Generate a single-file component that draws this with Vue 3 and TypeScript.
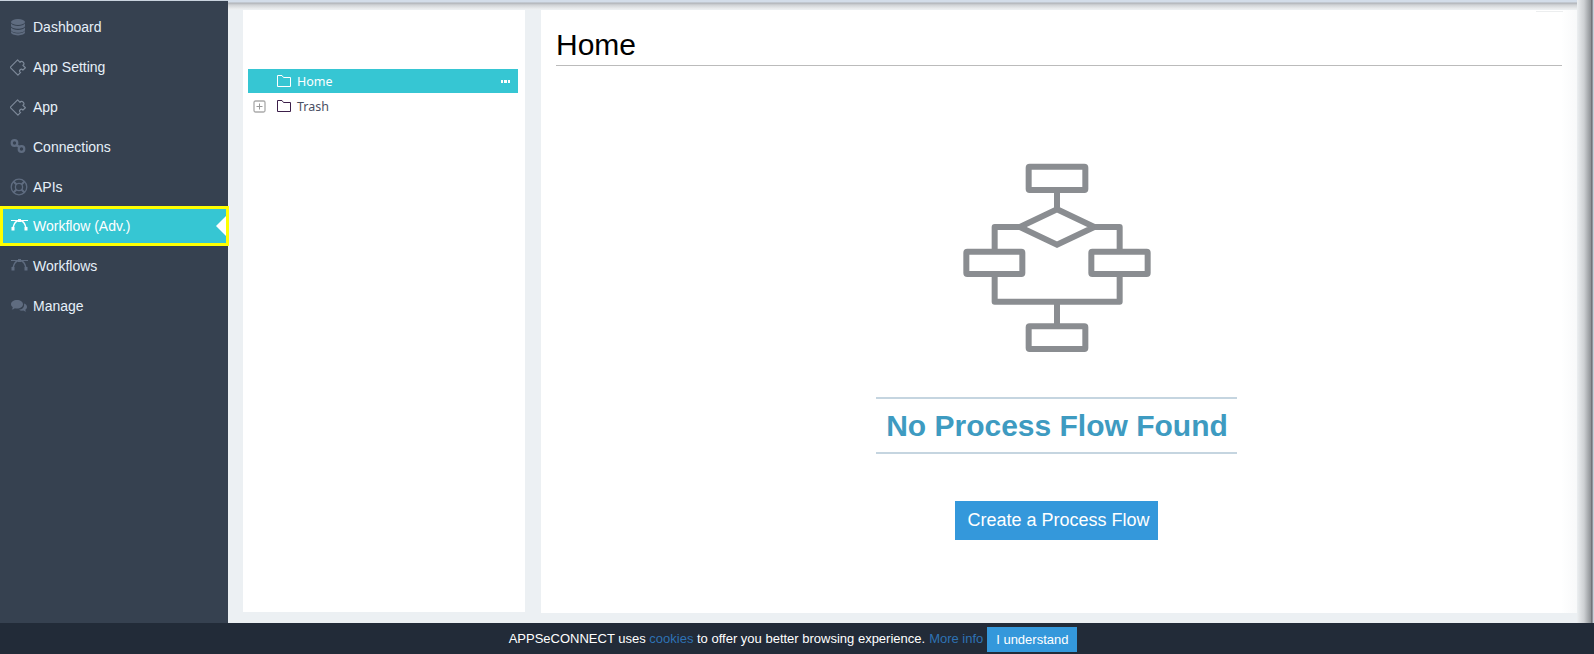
<template>
  <div class="page">
    <div class="main">
      <aside class="sidebar">
        <a
          v-for="item in menu"
          :key="item.label"
          class="menu-item"
          :class="{ active: item.active }"
        >
          <svg class="menu-icon" viewBox="0 0 18 18">
            <g v-if="item.icon === 'database'" fill="currentColor">
              <ellipse cx="8" cy="4" rx="7" ry="3" />
              <path d="M1 5.600c1.200 1.600 3.800 2.400 7 2.400s5.800-.8 7-2.400V8c0 1.600-3.100 2.800-7 2.800S1 9.600 1 8z" />
              <path d="M1 9.600c1.200 1.600 3.800 2.400 7 2.400s5.800-.8 7-2.400V12c0 1.600-3.100 2.800-7 2.800S1 13.600 1 12z" />
              <path d="M1 13c1.200 1.600 3.800 2.400 7 2.400s5.800-.8 7-2.400v1.600c0 1.600-3.100 2.800-7 2.800s-7-1.200-7-2.800z" />
            </g>
            <path
              v-else-if="item.icon === 'puzzle'"
              d="M3 5h3.500c-1.400-3.200 5.400-3.200 4 0H14v3.500c-3-1.300-3 4.500 0 3.200V15.500H3z"
              transform="rotate(45 9 9)"
              fill="none"
              stroke="#7d8999"
              stroke-width="1.200"
              stroke-linejoin="round"
            />
            <g v-else-if="item.icon === 'link'" fill="none" stroke="currentColor" stroke-width="2.200">
              <circle cx="4.500" cy="5" r="2.800" />
              <circle cx="11.500" cy="11" r="2.800" />
              <path d="M6.500 7l3 2.200" />
            </g>
            <g v-else-if="item.icon === 'ring'" fill="none" stroke="currentColor">
              <circle cx="9" cy="9" r="7.800" stroke-width="1.300" />
              <circle cx="9" cy="9" r="3.600" stroke-width="1.300" />
              <path d="M3.500 3.500l3 3M14.500 3.500l-3 3M3.500 14.500l3-3M14.500 14.500l-3-3" stroke-width="2" />
            </g>
            <g v-else-if="item.icon === 'vector'">
              <path d="M3 11C4 6 6.500 3.500 9.500 3.500S15 6 16 11" fill="none" stroke="currentColor" stroke-width="1.400" />
              <path d="M1 3.500h17" fill="none" stroke="currentColor" stroke-width="1" />
              <rect x="8" y="2" width="3" height="3" fill="currentColor" />
              <rect x="1.500" y="10" width="3" height="3.500" fill="currentColor" />
              <rect x="14.500" y="10" width="3" height="3.500" fill="currentColor" />
            </g>
            <g v-else fill="currentColor">
              <path d="M7 3c3.500 0 6 1.900 6 4.300s-2.500 4.300-6 4.300c-.8 0-1.500-.1-2.100-.3-.9.800-2 1.200-3.200 1.300.6-.7 1-1.500 1.100-2.300C1.700 9.500 1 8.500 1 7.300 1 4.900 3.500 3 7 3z" />
              <path d="M14 6.500c1.800.6 3 1.900 3 3.500 0 1.100-.6 2-1.700 2.700.1.800.5 1.500 1 2.100-1.100-.1-2.100-.5-2.900-1.200-1.600.3-3.300 0-4.400-.8 3.200-.2 5.800-2.500 5-6.300z" />
            </g>
          </svg>
          <span>{{ item.label }}</span>
        </a>
      </aside>

      <div class="content">
        <section class="tree-panel">
          <div class="tree-row selected">
            <span class="expander"></span>
            <svg class="folder" viewBox="0 0 14 12">
              <path d="M.5 11.500V.5h4.500l1.500 2h7v9z" fill="none" stroke="currentColor" />
            </svg>
            <span class="tree-label">Home</span>
            <span class="dots"><i></i><i></i><i></i></span>
          </div>
          <div class="tree-row">
            <svg class="expander plus" viewBox="0 0 13 13">
              <rect x="1" y="1" width="11" height="11" rx="1.500" fill="none" stroke="#aaa" stroke-width="1.300" />
              <path d="M3.500 6.500h6M6.500 3.500v6" stroke="#999" />
            </svg>
            <svg class="folder dark" viewBox="0 0 14 12">
              <path d="M.5 11.500V.5h4.500l1.500 2h7v9z" fill="none" stroke="currentColor" />
            </svg>
            <span class="tree-label">Trash</span>
          </div>
        </section>

        <section class="flow-panel">
          <h1>Home</h1>
          <div class="empty">
            <svg class="flowchart" viewBox="0 0 690 630">
              <g fill="none" stroke="#8a8d91" stroke-width="18" stroke-linejoin="round">
                <rect x="266" y="50" width="170" height="70" rx="3" />
                <path d="M351 120v60" />
                <path d="M351 178l112 53-112 53-112-53z" stroke-linejoin="miter" />
                <path d="M239 231h-75v74M463 231h76v74" />
                <rect x="79" y="305" width="168" height="67" rx="3" />
                <rect x="454" y="305" width="169" height="67" rx="3" />
                <path d="M164 372v83h375v-83M351 455v74" />
                <rect x="266" y="529" width="170" height="68" rx="3" />
              </g>
            </svg>
            <h2>No Process Flow Found</h2>
            <button class="create-btn" type="button">Create a Process Flow</button>
          </div>
        </section>
      </div>
    </div>

    <footer class="cookie-bar">
      <span>APPSeCONNECT uses <a>cookies</a> to offer you better browsing experience.</span>
      <a>More info</a>
      <button type="button">I understand</button>
    </footer>
  </div>
</template>

<script setup lang="ts">
type MenuItem = {
  label: string
  icon: 'database' | 'puzzle' | 'link' | 'ring' | 'vector' | 'comments'
  active?: boolean
}

const menu: MenuItem[] = [
  { label: 'Dashboard', icon: 'database' },
  { label: 'App Setting', icon: 'puzzle' },
  { label: 'App', icon: 'puzzle' },
  { label: 'Connections', icon: 'link' },
  { label: 'APIs', icon: 'ring' },
  { label: 'Workflow (Adv.)', icon: 'vector', active: true },
  { label: 'Workflows', icon: 'vector' },
  { label: 'Manage', icon: 'comments' }
]
</script>

<style scoped>
.page {
  display: flex;
  flex-direction: column;
  height: 654px;
  overflow: hidden;
  font-family: "Liberation Sans", Arial, sans-serif;
  background: #ecf0f3;
}

.main {
  display: flex;
  flex: 1;
  min-height: 0;
  position: relative;
}

.sidebar {
  width: 228px;
  flex-shrink: 0;
  padding-top: 6px;
  box-sizing: border-box;
  background: #364150;
  border-top: 1px solid #c9d3de;
  position: relative;
  z-index: 2;
}

.menu-item {
  display: flex;
  align-items: center;
  height: 40px;
  padding-left: 10px;
  box-sizing: border-box;
  color: #e6f0f9;
  font-size: 14px;
  position: relative;
}

.menu-icon {
  width: 18px;
  height: 18px;
  margin-right: 5px;
  color: #5f6c80;
  flex-shrink: 0;
}

.menu-item.active {
  width: 229px;
  margin-top: -1px;
  padding-left: 7px;
  background: #36c6d3;
  border: 3px solid #ffff00;
  color: #fff;
}

.menu-item.active .menu-icon {
  color: #fff;
}

.menu-item.active::after {
  content: "";
  position: absolute;
  right: 0;
  top: 7px;
  border-style: solid;
  border-width: 10px 10px 10px 0;
  border-color: transparent #fff transparent transparent;
}

.content {
  flex: 1;
  display: flex;
  gap: 16px;
  padding: 10px 17px 10px 15px;
  min-width: 0;
  position: relative;
}

/* header and edge shadows lie over the panels */
.content::before {
  content: "";
  position: absolute;
  left: 0;
  right: 0;
  top: 0;
  height: 10px;
  background: linear-gradient(#d3dde9 0, #d3dde9 2px, #b0b3b7 3px, #d0d3d6 5px, #eceeef 9px, rgba(236, 240, 243, 0) 10px);
}

.content::after {
  content: "";
  position: absolute;
  right: 0;
  top: 0;
  bottom: 0;
  width: 17px;
  background: linear-gradient(90deg, #eceff1 0, #cdd0d3 7px, #8d9195 14px, #55595e 15px, #c8cfd8 16px);
}

.tree-panel {
  width: 282px;
  flex-shrink: 0;
  padding: 59px 7px 0 5px;
  box-sizing: border-box;
  background: #fff;
  margin-bottom: 1px;
}

.tree-row {
  display: flex;
  align-items: center;
  height: 24px;
  padding-left: 5px;
  margin-bottom: 1px;
  color: #4a4f63;
  font-family: "Noto Sans", sans-serif;
  font-size: 12.500px;
}

.tree-row.selected {
  background: #36c6d3;
  color: #fff;
}

.expander {
  width: 13px;
  height: 13px;
  margin-right: 11px;
  flex-shrink: 0;
}

.folder {
  width: 14px;
  height: 12px;
  margin-right: 6px;
  flex-shrink: 0;
}

.folder.dark {
  color: #3c1f4a;
}

.dots {
  display: flex;
  gap: 1px;
  margin-left: auto;
  margin-right: 8px;
}

.dots i {
  display: block;
  width: 2.500px;
  height: 3px;
  background: #fff;
}

.flow-panel {
  flex: 1;
  min-width: 0;
  background: linear-gradient(90deg, #fff calc(100% - 16px), #f8f9fa);
  padding: 0 15px;
  display: flex;
  flex-direction: column;
  position: relative;
}

.flow-panel::before {
  content: "";
  position: absolute;
  top: 1px;
  right: 14px;
  width: 27px;
  height: 1px;
  background: #eceeef;
}

h1 {
  margin: 0;
  height: 55px;
  line-height: 69px;
  font-size: 30px;
  font-weight: 400;
  color: #000;
  border-bottom: 1px solid #bbb;
}

.empty {
  display: flex;
  flex-direction: column;
  align-items: center;
  padding-right: 6px;
}

.flowchart {
  width: 230px;
  height: 210px;
  margin-top: 84px;
  margin-left: -3px;
}

h2 {
  width: 361px;
  margin: 37px 0 0;
  height: 53px;
  line-height: 53px;
  text-align: center;
  text-indent: 2px;
  font-size: 30px;
  font-weight: 700;
  color: #3e9bc1;
  border-top: 2px solid #c5d5e0;
  border-bottom: 2px solid #c5d5e0;
}

.create-btn {
  height: 39px;
  margin-top: 47px;
  padding: 0 8px 0 12px;
  margin-left: 1px;
  border: 0;
  background: #3498db;
  color: #fff;
  font-family: inherit;
  font-size: 18px;
}

.cookie-bar {
  height: 31px;
  flex-shrink: 0;
  display: flex;
  align-items: center;
  justify-content: center;
  gap: 4px;
  padding-right: 8px;
  background: #222b38;
  color: #fff;
  font-size: 13px;
  position: relative;
  z-index: 3;
}

.cookie-bar a {
  color: #2e72b4;
}

.cookie-bar button {
  width: 90px;
  height: 25px;
  margin-top: 2px;
  border: 0;
  background: #3498db;
  color: #fff;
  font-family: inherit;
  font-size: 13px;
}
</style>
